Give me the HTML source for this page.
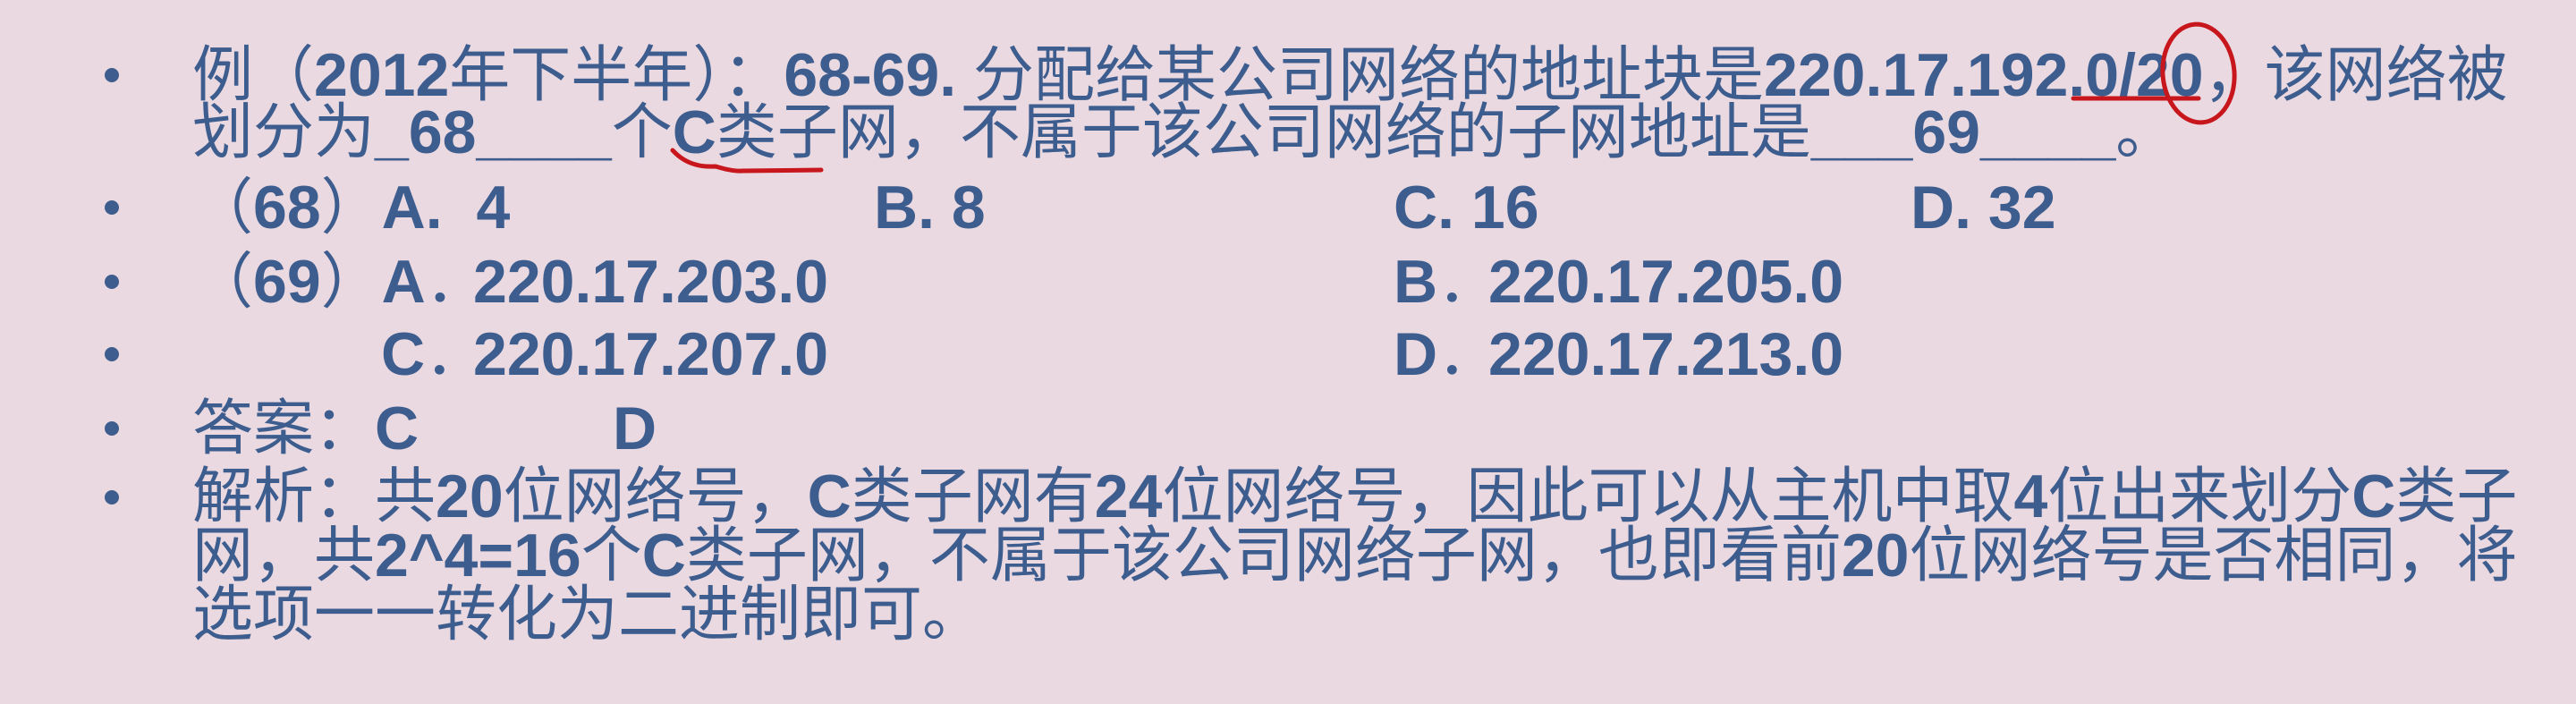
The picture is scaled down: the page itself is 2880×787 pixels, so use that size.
<!DOCTYPE html>
<html><head><meta charset="utf-8"><style>
html,body{margin:0;padding:0}
body{width:2880px;height:787px;background:#ead9e1;position:relative;overflow:hidden;
font-family:"Liberation Sans","Noto Sans CJK SC",sans-serif;color:#3d5d8e;font-size:68px}
.l{position:absolute;white-space:nowrap;line-height:64px}
b{font-weight:bold}
.d{position:absolute;left:117px;width:16px;height:16px;border-radius:50%;background:#3d5d8e}
</style></head><body>
<div class="d" style="top:76px"></div>
<div class="d" style="top:224px"></div>
<div class="d" style="top:307px"></div>
<div class="d" style="top:388px"></div>
<div class="d" style="top:471px"></div>
<div class="d" style="top:548px"></div>

<div class="l" style="left:215px;top:52px">例（<b>2012</b>年下半年）：<b>68-69.</b> 分配给某公司网络的地址块是<b>220.17.192.0/20</b>，该网络被</div>
<div class="l" style="left:215px;top:116px">划分为<b>_68____</b>个<b>C</b>类子网，不属于该公司网络的子网地址是<b>___69____</b>。</div>

<div class="l" style="left:215px;top:200px">（<b>68</b>）<b>A.</b>&nbsp; <b>4</b></div>
<div class="l" style="left:977px;top:200px"><b>B. 8</b></div>
<div class="l" style="left:1558px;top:200px"><b>C. 16</b></div>
<div class="l" style="left:2136px;top:200px"><b>D. 32</b></div>

<div class="l" style="left:215px;top:283px">（<b>69</b>）<b>A</b>．</div>
<div class="l" style="left:529px;top:283px"><b>220.17.203.0</b></div>
<div class="l" style="left:1558px;top:283px"><b>B</b>．</div>
<div class="l" style="left:1664px;top:283px"><b>220.17.205.0</b></div>

<div class="l" style="left:426px;top:364px"><b>C</b>．</div>
<div class="l" style="left:529px;top:364px"><b>220.17.207.0</b></div>
<div class="l" style="left:1558px;top:364px"><b>D</b>．</div>
<div class="l" style="left:1664px;top:364px"><b>220.17.213.0</b></div>

<div class="l" style="left:215px;top:447px">答案：<b>C</b></div>
<div class="l" style="left:685px;top:447px"><b>D</b></div>

<div class="l" style="left:215px;top:523px">解析：共<b>20</b>位网络号，<b>C</b>类子网有<b>24</b>位网络号，因此可以从主机中取<b>4</b>位出来划分<b>C</b>类子</div>
<div class="l" style="left:215px;top:589px">网，共<b>2^4=16</b>个<b>C</b>类子网，不属于该公司网络子网，也即看前<b>20</b>位网络号是否相同，将</div>
<div class="l" style="left:215px;top:655px">选项一一转化为二进制即可。</div>

<svg width="2880" height="787" style="position:absolute;left:0;top:0" fill="none" stroke="#c8161d" stroke-width="5" stroke-linecap="round">
<path d="M752 168 Q770 188 800 186 Q820 192 830 191 L918 190"/>
<path d="M2318 110 L2458 110"/>
<ellipse cx="2458" cy="82" rx="40" ry="55" transform="rotate(-5 2458 82)"/>
</svg>
</body></html>
